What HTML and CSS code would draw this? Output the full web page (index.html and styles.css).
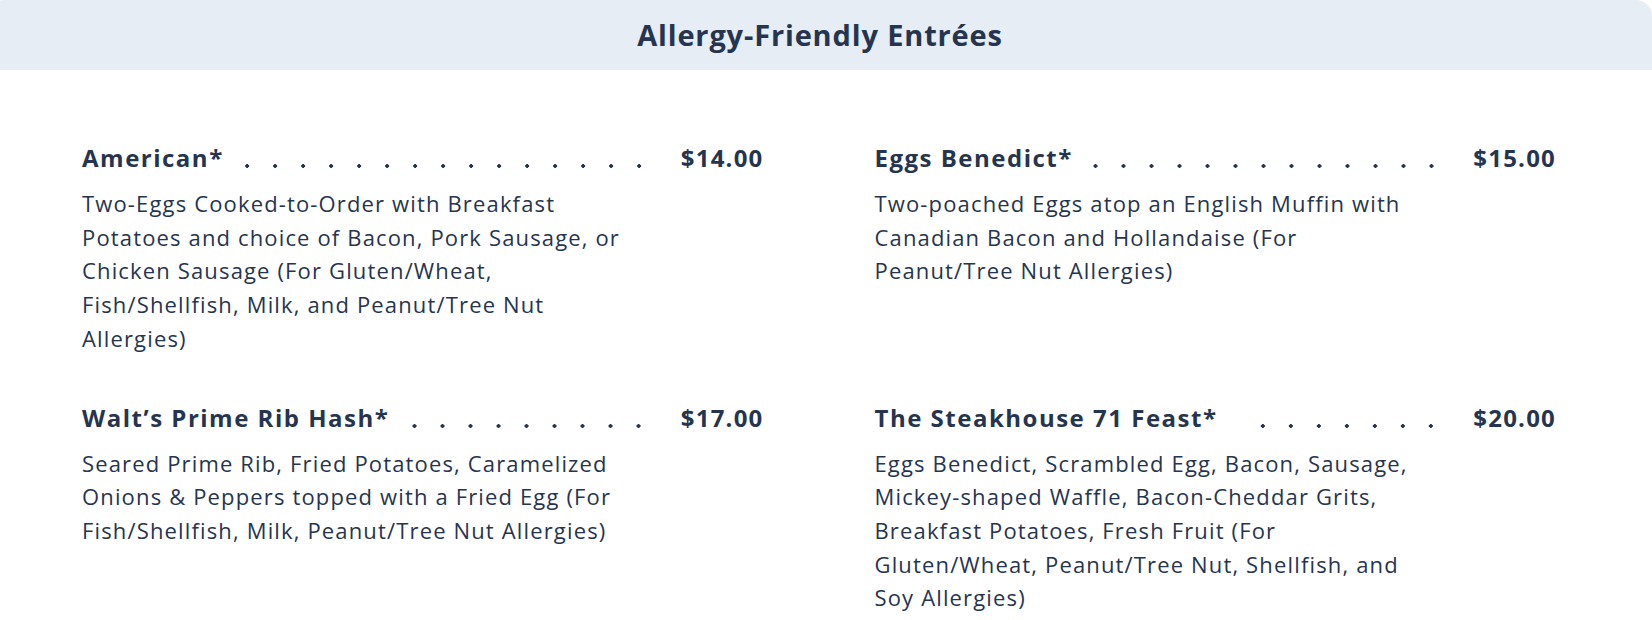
FILE: index.html
```html
<!DOCTYPE html>
<html lang="en">
<head>
<meta charset="utf-8">
<title>Allergy-Friendly Entrées</title>
<link rel="stylesheet" href="styles.css">
</head>
<body>
<section class="card">
  <header class="card-head">
    <h2 class="card-title">Allergy-Friendly Entrées</h2>
  </header>
  <div class="menu">
    <article class="item">
      <div class="item-row">
        <h3 class="item-name">American*</h3>
        <span class="leader"></span>
        <span class="item-price">$14.00</span>
      </div>
      <p class="item-desc">Two-Eggs Cooked-to-Order with Breakfast Potatoes and choice of Bacon, Pork Sausage, or Chicken Sausage (For Gluten/Wheat, Fish/Shellfish, Milk, and Peanut/Tree Nut Allergies)</p>
    </article>
    <article class="item">
      <div class="item-row">
        <h3 class="item-name">Eggs Benedict*</h3>
        <span class="leader"></span>
        <span class="item-price">$15.00</span>
      </div>
      <p class="item-desc">Two-poached Eggs atop an English Muffin with Canadian Bacon and Hollandaise (For Peanut/Tree Nut Allergies)</p>
    </article>
    <article class="item">
      <div class="item-row">
        <h3 class="item-name">Walt’s Prime Rib Hash*</h3>
        <span class="leader"></span>
        <span class="item-price">$17.00</span>
      </div>
      <p class="item-desc">Seared Prime Rib, Fried Potatoes, Caramelized Onions &amp; Peppers topped with a Fried Egg (For Fish/Shellfish, Milk, Peanut/Tree Nut Allergies)</p>
    </article>
    <article class="item">
      <div class="item-row">
        <h3 class="item-name">The Steakhouse 71 Feast*</h3>
        <span class="leader"></span>
        <span class="item-price">$20.00</span>
      </div>
      <p class="item-desc">Eggs Benedict, Scrambled Egg, Bacon, Sausage, Mickey-shaped Waffle, Bacon-Cheddar Grits, Breakfast Potatoes, Fresh Fruit (For Gluten/Wheat, Peanut/Tree Nut, Shellfish, and Soy Allergies)</p>
    </article>
  </div>
</section>
</body>
</html>
```
FILE: styles.css
```css
* { box-sizing: border-box; }
html, body { margin: 0; padding: 0; background: #ffffff; }
body {
  font-family: "Open Sans", "Liberation Sans", sans-serif;
  color: #26354f;
  overflow: hidden;
}
.card {
  width: 1664px;
  margin-left: -12px;
  border-radius: 16px 16px 0 0;
  background: #ffffff;
  overflow: hidden;
}
.card-head {
  height: 70px;
  background: #e6edf5;
  display: flex;
  align-items: center;
  justify-content: center;
  padding-bottom: 2px;
}
.card-title {
  margin: 0;
  font-size: 29px;
  font-weight: 700;
  letter-spacing: 0.85px;
  color: #26354f;
}
.menu {
  display: grid;
  grid-template-columns: 1fr 1fr;
  column-gap: 111px;
  row-gap: 45px;
  padding: 71px 96px 0 94px;
}
.item-row {
  display: flex;
  align-items: baseline;
  height: 34px;
  line-height: 34px;
}
.item-name {
  margin: 0;
  font-size: 24px;
  font-weight: 700;
  letter-spacing: 1.5px;
  white-space: nowrap;
}
.leader {
  flex: 1;
  align-self: stretch;
  margin: 0 28px 0 20px;
  background-image: radial-gradient(circle, #26354f 1.6px, transparent 2.1px);
  background-size: 28px 6px;
  background-repeat: repeat-x;
  background-position: right 0 bottom 6px;
}
.item-price {
  font-size: 24px;
  font-weight: 700;
  letter-spacing: 1.2px;
}
.item-desc {
  margin: 12px 0 0;
  max-width: 556px;
  font-size: 22px;
  line-height: 33.7px;
  letter-spacing: 1.15px;
}
```
